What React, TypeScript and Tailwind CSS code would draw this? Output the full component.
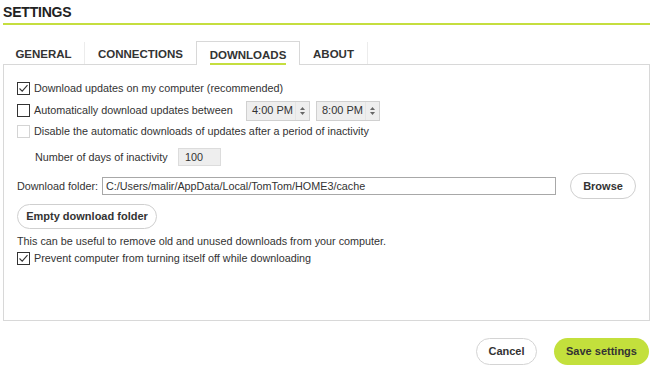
import React from "react";

function CheckBox({ checked, disabled }: { checked?: boolean; disabled?: boolean }) {
  return (
    <span
      className={`flex h-[13px] w-[13px] shrink-0 items-center justify-center border bg-white ${
        disabled ? "border-[#d4d4d4]" : "border-[#333]"
      }`}
    >
      {checked && (
        <svg width="11" height="11" viewBox="0 0 11 11" fill="none">
          <path d="M1.5 5.5 L4.2 8.2 L9.5 2.2" stroke="#333" strokeWidth="1.1" />
        </svg>
      )}
    </span>
  );
}

function TimeBox({ value }: { value: string }) {
  return (
    <div className="flex h-[20px] w-[64px] items-center border border-[#d0d0d0] bg-[#eeeeee]">
      <span className="flex-1 pl-[5px] text-[11px] text-[#333]">{value}</span>
      <span className="flex h-full w-[14px] flex-col items-center justify-center gap-[2px] border-l border-[#e4e4e4]">
        <svg width="5" height="3" viewBox="0 0 5 3">
          <path d="M0 3 L2.5 0 L5 3 Z" fill="#666" />
        </svg>
        <svg width="5" height="3" viewBox="0 0 5 3">
          <path d="M0 0 L2.5 3 L5 0 Z" fill="#666" />
        </svg>
      </span>
    </div>
  );
}

const tabs = [
  { label: "GENERAL", w: "w-[82px]", sep: true },
  { label: "CONNECTIONS", w: "w-[111px]", sep: false },
  { label: "DOWNLOADS", w: "w-[104px]", active: true },
  { label: "ABOUT", w: "w-[68px]", sep: true },
];

export default function App() {
  return (
    <div className="h-[370px] w-[653px] overflow-hidden bg-white font-['Liberation_Sans',Arial,sans-serif] text-[#333]">
      {/* Header */}
      <div className="mx-[3px] flex h-[25px] items-start border-b-2 border-[#c5de3f] pt-[4px]">
        <h1 className="text-[14px] font-bold leading-[17px] tracking-[-0.2px] text-[#222]">SETTINGS</h1>
      </div>

      {/* Tabs */}
      <div className="mx-[3px] mt-[16px] flex h-[23px] items-end">
        {tabs.map((t) =>
          t.active ? (
            <div
              key={t.label}
              className={`relative -mb-px flex h-[24px] ${t.w} items-start justify-center border border-b-0 border-[#d8d8d8] bg-white pt-[6px]`}
            >
              <span className="border-b-2 border-[#c5de3f] pb-[1px] text-[11.5px] font-bold leading-[14px] text-[#333]">
                {t.label}
              </span>
            </div>
          ) : (
            <div
              key={t.label}
              className={`flex h-[22px] ${t.w} items-start justify-center pt-[5px] ${
                t.sep ? "border-r border-[#ececec]" : ""
              }`}
            >
              <span className="text-[11.5px] font-bold leading-[14px] text-[#333]">{t.label}</span>
            </div>
          )
        )}
      </div>

      {/* Panel */}
      <div className="mx-[3px] h-[257px] border border-[#d8d8d8] pl-[13px] pr-[12px] text-[10.8px]">
        <div className="mt-[14px] flex h-[18px] items-center gap-[4px]">
          <CheckBox checked />
          <span>Download updates on my computer (recommended)</span>
        </div>

        <div className="mt-[3px] flex h-[21px] items-center">
          <CheckBox />
          <span className="w-[216px] pl-[4px]">Automatically download updates between</span>
          <TimeBox value="4:00 PM" />
          <div className="w-[6px]" />
          <TimeBox value="8:00 PM" />
        </div>

        <div className="flex h-[20px] items-center gap-[4px]">
          <CheckBox disabled />
          <span>Disable the automatic downloads of updates after a period of inactivity</span>
        </div>

        <div className="mt-[6px] flex h-[20px] items-center pl-[18px]">
          <span className="w-[143px]">Number of days of inactivity</span>
          <div className="flex h-[18px] w-[43px] items-center border border-[#dcdcdc] bg-[#eeeeee] pl-[6px]">100</div>
        </div>

        <div className="mt-[5px] flex h-[28px] items-center">
          <span className="w-[85px]">Download folder:</span>
          <div className="flex h-[18px] w-[454px] items-center border border-[#a8a8a8] bg-white pl-[3px]">
            C:/Users/malir/AppData/Local/TomTom/HOME3/cache
          </div>
          <button className="ml-[14px] h-[26px] w-[66px] rounded-full border border-[#cfcfcf] bg-white text-[11px] font-bold text-[#333]">
            Browse
          </button>
        </div>

        <button className="mt-[4px] h-[25px] w-[140px] rounded-full border border-[#cfcfcf] bg-white text-[11px] font-bold text-[#333]">
          Empty download folder
        </button>

        <div className="mt-[4px] flex h-[16px] items-center">
          This can be useful to remove old and unused downloads from your computer.
        </div>

        <div className="mt-[1px] flex h-[16px] items-center gap-[4px]">
          <CheckBox checked />
          <span>Prevent computer from turning itself off while downloading</span>
        </div>
      </div>

      {/* Footer */}
      <div className="mt-[17px] flex justify-end gap-[17px] pr-[4px]">
        <button className="h-[27px] w-[61px] rounded-full border border-[#d4d4d4] bg-white text-[11px] font-bold text-[#333]">
          Cancel
        </button>
        <button className="h-[27px] w-[95px] rounded-full bg-[#c3e03c] text-[11px] font-bold text-[#333]">
          Save settings
        </button>
      </div>
    </div>
  );
}
